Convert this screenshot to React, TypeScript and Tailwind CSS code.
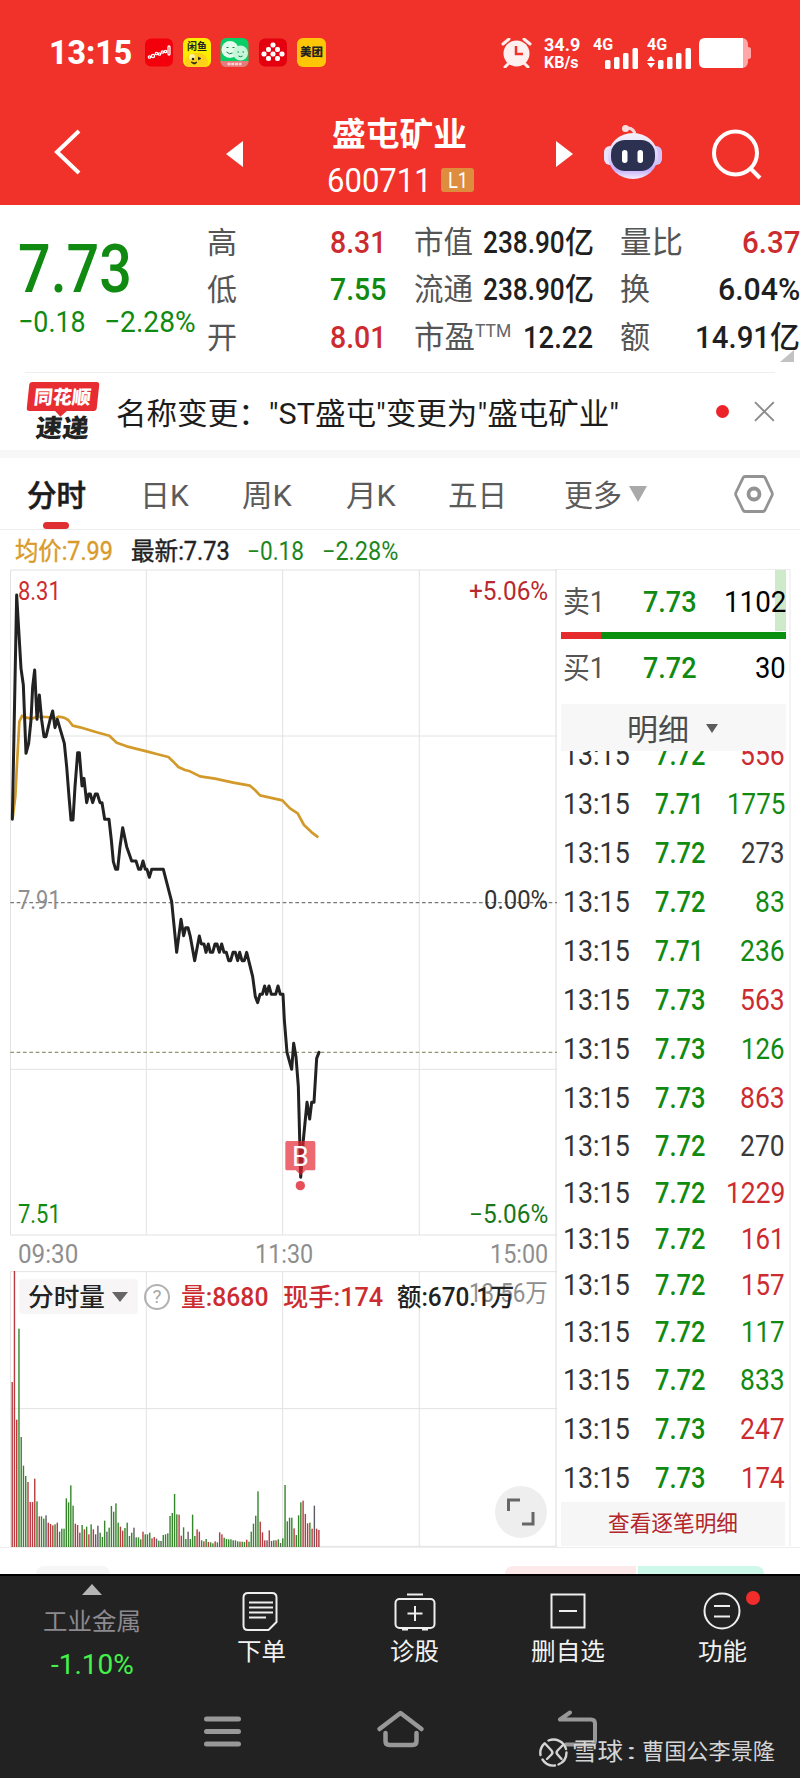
import { useLayoutEffect, useRef, useState, type ReactNode } from 'react';

const RED = 'text-[#cc2b30]';
const GREEN = 'text-[#108a10]';
const DARK = 'text-[#3a3a3a]';

// squeezes a run of text horizontally so it fills the width given in className
function Fit({ className = '', children }: { className?: string; children: ReactNode }) {
  const box = useRef<HTMLSpanElement>(null);
  const text = useRef<HTMLSpanElement>(null);
  const [ratio, setRatio] = useState(1);

  useLayoutEffect(() => {
    if (box.current && text.current) {
      setRatio(box.current.clientWidth / text.current.offsetWidth);
    }
  }, [children]);

  return (
    <span ref={box} className={`block shrink-0 ${className}`}>
      <span
        ref={text}
        className="inline-block origin-left whitespace-nowrap"
        style={{ transform: `scaleX(${ratio})` }}
      >
        {children}
      </span>
    </span>
  );
}

function SignalBars() {
  return (
    <svg width="34" height="21" viewBox="0 0 34 21" fill="#fff">
      <rect x="0" y="12" width="5.5" height="9" rx="1.5" />
      <rect x="9" y="9" width="5.5" height="12" rx="1.5" />
      <rect x="18" y="5" width="5.5" height="16" rx="1.5" />
      <rect x="27.5" y="0" width="5.5" height="21" rx="1.5" />
    </svg>
  );
}

function StatusBar() {
  return (
    <div className="flex h-[106px] items-start pl-[49px] pt-[38px] text-white">
      <Fit className="mt-[-1px] w-[83px] text-[34px] font-extrabold leading-[31px]">13:15</Fit>
      <div className="ml-[13px] flex gap-[10px]">
        <svg width="28" height="29" viewBox="0 0 28 29">
          <rect y="0.5" width="28" height="28" rx="6" fill="#f4000c" />
          <g fill="none" stroke="#fff" strokeWidth="1.3">
            <circle cx="4.5" cy="19" r="1.2" />
            <circle cx="8" cy="18" r="1.6" />
            <circle cx="11.5" cy="15.5" r="1.2" />
            <circle cx="14.5" cy="16" r="1.2" />
            <circle cx="17.5" cy="14" r="1.2" />
            <circle cx="20.5" cy="13.5" r="1.2" />
            <rect x="23" y="8" width="2" height="9" rx="1" />
          </g>
        </svg>
        <div className="relative h-[29px] w-[28px] overflow-hidden rounded-[6px] bg-[#fdee00] text-center text-[10px] font-bold leading-[17px] text-[#222]">
          闲鱼
          <svg className="absolute bottom-0 left-0" width="28" height="15" viewBox="0 0 28 15">
            <rect x="2" y="1" width="23" height="18" rx="9" fill="#ffd21a" />
            <circle cx="9" cy="5" r="3" fill="#fff59a" />
            <circle cx="10" cy="7" r="1.3" fill="#222" />
            <path d="M15 5l3 1.500-3 1.500M8 10q4 1.500 6 0-2 4-6 0z" fill="#222" stroke="#222" strokeWidth="0.7" />
          </svg>
        </div>
        <svg className="ml-[-1px]" width="29" height="29" viewBox="0 0 28 29">
          <rect width="28" height="29" rx="6" fill="#08ce67" />
          <path d="M0 23h28v1q-1 5-6 5H6q-5 0-6-5z" fill="#e9787a" />
          <circle cx="9.500" cy="11.500" r="8.500" fill="#e2fbec" />
          <circle cx="20" cy="15" r="7.500" fill="#c6f6d8" />
          <path d="M6 9.500h2M12 9.500h2M17 14h1.500M22 14h1.500M6 14q3 3 6 1M18 18q2 1.500 4 0" stroke="#098446" fill="none" />
          <path d="M7 26h14" stroke="#fbd5d5" strokeWidth="2.500" strokeDasharray="3 0.800" />
        </svg>
        <svg width="28" height="29" viewBox="0 0 28 29">
          <rect y="0.5" width="28" height="28" rx="6" fill="#e4000e" />
          <g fill="#fff">
            <rect x="11.500" y="4.500" width="5" height="5" rx="2" />
            <rect x="7" y="9" width="5" height="5" rx="2" />
            <rect x="16" y="9" width="5" height="5" rx="2" />
            <rect x="2.500" y="13.500" width="5" height="5" rx="2" />
            <rect x="11.500" y="13.500" width="5" height="5" rx="2" />
            <rect x="20.500" y="13.500" width="5" height="5" rx="2" />
            <rect x="7" y="18" width="5" height="5" rx="2" />
            <rect x="16" y="18" width="5" height="5" rx="2" />
          </g>
        </svg>
        <div className="h-[29px] w-[29px] rounded-[6px] bg-[#ffc608] text-center text-[11.500px] font-black leading-[29px] text-[#222]">
          美团
        </div>
      </div>

      <svg className="ml-[175px]" width="31" height="30" viewBox="0 0 31 30">
        <circle cx="15.500" cy="15.500" r="13" fill="#fff0f0" />
        <path d="M2 6l6-5M29 6l-6-5M4 29l4-4M27 29l-4-4" stroke="#fff0f0" strokeWidth="3" strokeLinecap="round" />
        <path d="M15 8v8h7" fill="none" stroke="#f0322b" strokeWidth="2.500" />
      </svg>
      <div className="ml-[12px] mt-[-2px] w-[36px] text-[18px] font-bold leading-[18px]">
        <Fit className="w-[36px]">34.9</Fit>
        <Fit className="w-[35px] text-[16px]">KB/s</Fit>
      </div>
      <div className="relative ml-[13px] h-[30px] w-[46px]">
        <Fit className="w-[20px] text-[16px] font-bold leading-[14px]">4G</Fit>
        <div className="absolute left-[12px] top-[10px]"><SignalBars /></div>
      </div>
      <div className="relative ml-[8px] h-[30px] w-[46px]">
        <Fit className="w-[20px] text-[16px] font-bold leading-[14px]">4G</Fit>
        <svg className="absolute left-0 top-[18px]" width="8" height="12" viewBox="0 0 8 12" fill="#fff">
          <path d="M4 0l4 5H0zM4 12l4-5H0z" />
        </svg>
        <div className="absolute left-[11px] top-[10px]"><SignalBars /></div>
      </div>
      <svg className="ml-[6px]" width="52" height="30" viewBox="0 0 52 30">
        <rect x="10" width="39" height="30" rx="6" fill="#ffa6a6" />
        <rect x="46" y="9" width="6" height="12" rx="2.500" fill="#ffa6a6" />
        <path d="M6 0h38v30H6q-6 0-6-6V6q0-6 6-6z" fill="#fff" />
      </svg>
    </div>
  );
}

function TitleBar() {
  return (
    <div className="flex h-[99px] items-start text-white">
      <svg className="ml-[53px] mt-[23px]" width="28" height="46" viewBox="0 0 28 46">
        <path d="M26 2L4 23l22 21" fill="none" stroke="#fff" strokeWidth="4" />
      </svg>
      <svg className="ml-[145px] mt-[35px]" width="18" height="26" viewBox="0 0 18 26">
        <path d="M17 0v26L0 13z" fill="#fff" />
      </svg>
      <div className="ml-[83px] w-[154px]">
        <Fit className="ml-[5px] mt-[11px] w-[135px] text-[33px] font-bold leading-[36px]">盛屯矿业</Fit>
        <div className="mt-[9px] flex items-center">
          <Fit className="w-[105px] text-[34px] leading-[36px]">600711</Fit>
          <div className="ml-[9px] flex h-[24px] w-[33px] justify-center rounded-[3px] bg-[#de8c3e] text-[22px] leading-[25px]">
            <Fit className="w-[20px]">L1</Fit>
          </div>
        </div>
      </div>
      <svg className="ml-[75px] mt-[35px]" width="18" height="26" viewBox="0 0 18 26">
        <path d="M0 0v26l17-13z" fill="#fff" />
      </svg>
      <svg className="ml-[29px] mt-[18px]" width="60" height="56" viewBox="0 0 60 56">
        <defs>
          <linearGradient id="shell" x1="0" y1="0" x2="0" y2="1">
            <stop offset="0" stopColor="#f4f1fb" />
            <stop offset="0.55" stopColor="#dcd2fa" />
            <stop offset="0.8" stopColor="#c3aefb" />
            <stop offset="1" stopColor="#f6effd" />
          </linearGradient>
        </defs>
        <path d="M24 4q8 0 8 8" fill="none" stroke="#f7d5dc" strokeWidth="3" />
        <circle cx="22.500" cy="4.500" r="3.500" fill="#f9dfe4" />
        <rect x="1" y="22" width="12" height="19" rx="6" fill="#e8e2fb" />
        <rect x="47" y="22" width="12" height="19" rx="6" fill="#d2c4fb" />
        <ellipse cx="30" cy="32" rx="25" ry="23" fill="url(#shell)" />
        <rect x="8" y="16" width="44" height="31" rx="14" fill="#2c3152" />
        <rect x="19" y="26" width="5.500" height="13" rx="2.700" fill="#fff" />
        <rect x="34.500" y="26" width="5.500" height="13" rx="2.700" fill="#fff" />
      </svg>
      <svg className="ml-[49px] mt-[23px]" width="50" height="52" viewBox="0 0 50 52">
        <circle cx="23.500" cy="24" r="21.500" fill="none" stroke="#fff" strokeWidth="4" />
        <path d="M38 39l10 10" stroke="#fff" strokeWidth="4" />
      </svg>
    </div>
  );
}

function Quote() {
  return (
    <div className="relative flex h-[167px] pt-[14px] text-[31px] font-medium leading-[47.3px] text-[#1f1f1f]">
      <div className="w-[207px] pl-[18px] text-[#108a10]">
        <Fit className="mt-[18px] w-[114px] text-[66px] leading-[66px]">7.73</Fit>
        <div className="mt-[-1px] flex text-[30px] font-normal leading-[40px]">
          <Fit className="w-[68px]">−0.18</Fit>
          <Fit className="ml-[18px] w-[92px]">−2.28%</Fit>
        </div>
      </div>
      <div className="w-[179px]">
        <div className="flex justify-between"><span className="text-[30px] font-normal text-[#555]">高</span><Fit className="w-[56px] text-[#cc2b30]">8.31</Fit></div>
        <div className="flex justify-between"><span className="text-[30px] font-normal text-[#555]">低</span><Fit className="w-[56px] text-[#108a10]">7.55</Fit></div>
        <div className="flex justify-between"><span className="text-[30px] font-normal text-[#555]">开</span><Fit className="w-[56px] text-[#cc2b30]">8.01</Fit></div>
      </div>
      <div className="ml-[28px] w-[180px]">
        <div className="flex justify-between"><Fit className="w-[59px] font-normal text-[#555]">市值</Fit><div className="flex"><Fit className="w-[82px]">238.90</Fit><Fit className="w-[29px]">亿</Fit></div></div>
        <div className="flex justify-between"><Fit className="w-[59px] font-normal text-[#555]">流通</Fit><div className="flex"><Fit className="w-[82px]">238.90</Fit><Fit className="w-[29px]">亿</Fit></div></div>
        <div className="flex">
          <Fit className="w-[61px] font-normal text-[#555]">市盈</Fit>
          <Fit className="mt-[-7px] w-[36px] text-[18px] font-normal text-[#666]">TTM</Fit>
          <Fit className="ml-[12px] w-[70px]">12.22</Fit>
        </div>
      </div>
      <div className="ml-[26px] w-[180px]">
        <div className="flex justify-between"><Fit className="w-[63px] font-normal text-[#555]">量比</Fit><Fit className="w-[58px] text-[#cc2b30]">6.37</Fit></div>
        <div className="flex justify-between"><Fit className="w-[30px] font-normal text-[#555]">换</Fit><Fit className="w-[82px]">6.04%</Fit></div>
        <div className="flex justify-between"><Fit className="w-[30px] font-normal text-[#555]">额</Fit><div className="flex"><Fit className="w-[75px]">14.91</Fit><Fit className="w-[30px]">亿</Fit></div></div>
      </div>
      <svg className="absolute bottom-[10px] right-[6px]" width="14" height="12" viewBox="0 0 14 12">
        <path d="M14 0v12H0z" fill="#c2c2c2" />
      </svg>
    </div>
  );
}

function NewsBar() {
  return (
    <div className="mx-[25px] flex h-[78px] border-t border-[#eee]">
      <div className="ml-[3px] w-[72px] pt-[9px]">
        <div className="relative h-[29px] w-[70px] -skew-x-6 rounded-[3px] bg-[#e72d31] pl-[6px] text-[19px] font-black leading-[31px] text-white">
          <Fit className="w-[57px]">同花顺</Fit>
          <span className="absolute bottom-[-4px] left-[30px] size-[9px] rotate-45 bg-[#e72d31]" />
        </div>
        <div className="-skew-x-6 pl-[8px] pt-[3px] text-[25px] font-black leading-[30px] text-[#222]">
          <Fit className="w-[53px]">速递</Fit>
        </div>
      </div>
      <Fit className="ml-[17px] w-[503px] text-[30px] leading-[81px] text-[#1c1c1c]">名称变更："ST盛屯"变更为"盛屯矿业"</Fit>
      <span className="ml-[97px] mt-[32px] size-[13px] rounded-full bg-[#ec2429]" />
      <svg className="ml-[25px] mt-[28px]" width="21" height="21" viewBox="0 0 21 21">
        <path d="M1 1l19 19M20 1L1 20" stroke="#8d8d8d" strokeWidth="2" />
      </svg>
    </div>
  );
}

function Tabs() {
  return (
    <div className="flex h-[72px] items-start border-b border-[#ededed] text-[30px] leading-[76px] text-[#5b5b5b]">
      <div className="relative ml-[27px]">
        <Fit className="w-[59px] font-medium text-[#1c1c1c] [-webkit-text-stroke:0.6px_#1c1c1c]">分时</Fit>
        <span className="absolute left-[16px] top-[64px] h-[7px] w-[26px] rounded-full bg-[#e02f32]" />
      </div>
      <Fit className="ml-[54px] w-[49px]">日K</Fit>
      <Fit className="ml-[53px] w-[50px]">周K</Fit>
      <Fit className="ml-[54px] w-[50px]">月K</Fit>
      <Fit className="ml-[52px] w-[59px]">五日</Fit>
      <Fit className="ml-[57px] w-[58px]">更多</Fit>
      <svg className="ml-[7px] mt-[28px]" width="18" height="16" viewBox="0 0 18 16">
        <path d="M0 0h18L9 16z" fill="#a9a9a9" />
      </svg>
      <svg className="ml-[87px] mt-[17px]" width="40" height="38" viewBox="0 0 40 38">
        <path d="M11 1.500h18q1.500 0 2.200 1.300L38 17.500q.7 1.500 0 3L31 35q-.8 1.500-2 1.500H11q-1.200 0-2-1.500L2 20.500q-.7-1.500 0-3L9 2.800q.7-1.300 2-1.300z" fill="none" stroke="#939393" strokeWidth="2.800" />
        <circle cx="20" cy="19" r="5.500" fill="none" stroke="#939393" strokeWidth="3.800" />
      </svg>
    </div>
  );
}

// traces in chart units, three to a pixel
const PRICE =
  '37,1108 50,435 63,655 70,705 78,910 86,880 93,810 98,710 104,660 111,808 118,735 125,810 132,860 138,860 150,810 158,783 165,833 172,808 193,880 200,950 207,1040 213,1110 219,1110 225,1010 233,908 238,908 246,1008 252,985 260,1058 266,1032 271,1032 278,1058 286,1032 292,1032 300,1058 306,1058 314,1108 327,1108 334,1170 340,1235 347,1258 353,1258 360,1190 368,1133 380,1190 395,1233 408,1233 416,1258 422,1258 429,1233 436,1258 441,1258 448,1282 455,1258 490,1258 515,1355 530,1507 543,1408 551,1457 557,1433 564,1433 571,1460 584,1532 598,1458 604,1482 612,1482 618,1507 625,1482 631,1507 638,1507 645,1482 651,1482 658,1507 665,1482 672,1507 679,1507 686,1532 692,1532 699,1507 706,1507 713,1532 719,1507 726,1532 733,1532 740,1507 758,1580 766,1640 773,1658 780,1633 787,1633 794,1608 800,1633 807,1608 814,1633 827,1633 834,1608 841,1633 849,1633 853,1710 861,1807 875,1858 881,1780 888,1820 895,1910 902,2182 910,2070 921,1957 929,2007 935,1957 942,1957 950,1825 957,1807';

const AVERAGE =
  '38,1105 41,1080 46,1040 50,960 55,870 58,815 66,797 80,803 95,806 110,800 140,801 165,805 175,800 192,803 205,810 218,827 240,832 290,847 328,857 350,878 380,889 440,904 470,912 505,921 520,935 535,951 555,960 570,964 600,979 645,986 700,998 750,1007 765,1020 780,1036 810,1043 847,1051 870,1075 893,1090 912,1125 935,1147 955,1162';

// one bar per minute: colour letter and height
const VOLUME =
  'r495 r828 r382 g655 g330 g244 g213 r195 r135 r135 r205 g137 r92 g92 g85 k95 r73 r69 r65 g68 r73 g46 g55 g55 g146 g134 g185 g124 r70 r66 k43 g66 r53 g61 r38 g68 r53 k38 k64 g43 g30 g79 k46 g58 g123 g106 g131 g73 r61 r49 g57 g73 g33 g43 k58 g29 g29 g23 r46 g38 g38 g43 r26 r30 k25 g19 k18 g36 g38 g41 g93 g102 g159 g98 r97 r34 g59 g24 k46 g24 g97 g33 r53 r46 g20 r17 g24 r15 g14 g11 r17 g14 r44 r38 g28 g24 g23 g23 k20 g20 g17 r16 g16 g15 r22 g16 g46 g70 g94 g167 r76 r44 r20 k20 r50 k18 g20 r20 g23 k12 g26 g186 g77 g88 g88 r56 g36 g95 g134 r139 r99 r71 g73 r55 k124 r55 r51'.split(' ');

const BAR_COLORS: Record<string, string> = { r: '#b93a3e', g: '#35862b', k: '#5f5a66' };

function PriceChart() {
  return (
    <div className="relative h-[667px] text-[25px] leading-[28px]">
      <svg className="block" width="547" height="667" viewBox="30 357 1641 2001">
        <g stroke="#e2e2e2" strokeWidth="3" fill="none">
          <path d="M31.500 360h1640M31.500 858h1640M31.500 1858h1640M31.500 2355h1640M31.500 360v1995M439 360v1995M848 360v1995M1258 360v1995" />
        </g>
        <path d="M31 1358h1640" stroke="#777" strokeWidth="4" strokeDasharray="11 8" />
        <path d="M31 1807h1640" stroke="#8f9672" strokeWidth="4" strokeDasharray="11 8" />
        <polyline points={AVERAGE} fill="none" stroke="#d29a2a" strokeWidth="8" strokeLinejoin="round" />
        <polyline points={PRICE} fill="none" stroke="#222" strokeWidth="9" strokeLinejoin="round" strokeLinecap="round" />
        <path d="M861 2073h80q5 0 5 5v78q0 5-5 5h-24l-15 15-15-15h-26q-5 0-5-5v-78q0-5 5-5z" fill="#e3222f" fillOpacity="0.68" />
        <circle cx="901" cy="2207" r="14" fill="#e5505a" />
      </svg>
      <Fit className="absolute left-[8px] top-[9px] w-[43px] text-[#cc2b30]">8.31</Fit>
      <Fit className="absolute right-[8px] top-[9px] w-[79px] text-[#b8282d]">+5.06%</Fit>
      <Fit className="absolute left-[8px] top-[318px] w-[43px] text-[#8e8e8e]">7.91</Fit>
      <Fit className="absolute right-[8px] top-[318px] w-[64px] text-[#333]">0.00%</Fit>
      <Fit className="absolute left-[8px] top-[632px] w-[43px] text-[#108a10]">7.51</Fit>
      <Fit className="absolute right-[8px] top-[632px] w-[79px] text-[#187818]">−5.06%</Fit>
      <span className="absolute left-[276px] top-[573px] w-[29px] text-center text-[27px] leading-[30px] text-white">B</span>
    </div>
  );
}

function VolumeChart() {
  return (
    <div className="relative h-[276px] text-[25px] font-medium leading-[36px]">
      <svg className="block" width="547" height="276" viewBox="30 122 1641 828">
        <path
          d="M31.500 124h1640M31.500 535h1640M31.500 948h1640M31.500 124v824M439 124v824M848 124v824M1258 124v824"
          stroke="#e2e2e2"
          strokeWidth="3"
        />
        {VOLUME.map((bar, i) => {
          const h = Number(bar.slice(1));
          return <rect key={i} x={34.500 + i * 6.765} y={950 - h} width="4.200" height={h} fill={BAR_COLORS[bar[0]]} />;
        })}
      </svg>
      <Fit className="absolute right-[8px] top-[5px] w-[79px] font-normal text-[#8e8e8e]">13.56万</Fit>
      <div className="absolute left-[9px] top-[8px] flex h-[35px] items-center">
        <div className="flex h-[35px] w-[119px] items-center rounded-[4px] bg-[#f7f5f6] pl-[9px] text-[#222]">
          <Fit className="w-[77px] pt-[2px]">分时量</Fit>
          <svg className="ml-[7px]" width="16" height="10" viewBox="0 0 16 10">
            <path d="M0 0h16L8 10z" fill="#666" />
          </svg>
        </div>
        <div className="ml-[6px] flex size-[26px] items-center justify-center rounded-full border-2 border-[#b2b2b2] text-[19px] font-normal text-[#a5a5a5]">
          ?
        </div>
        <Fit className="ml-[11px] w-[87px] pt-[2px] text-[#cc2b30]">量:8680</Fit>
        <Fit className="ml-[15px] w-[100px] pt-[2px] text-[#cc2b30]">现手:174</Fit>
        <Fit className="ml-[14px] w-[117px] pt-[2px] text-[#222]">额:670.1万</Fit>
      </div>
      <div className="absolute bottom-[9px] right-[9px] flex size-[52px] items-center justify-center rounded-full bg-[#eee]">
        <svg width="28" height="28" viewBox="0 0 28 28">
          <path d="M1.500 13V2H13M15 26h11V14" fill="none" stroke="#666" strokeWidth="3" />
        </svg>
      </div>
    </div>
  );
}

const TRADES = [
  { price: '7.71', vol: '1775', color: GREEN, priceW: 'w-[49px]', volW: 'w-[58px]', row: 'h-[49px]' },
  { price: '7.72', vol: '273', color: DARK, priceW: 'w-[51px]', volW: 'w-[44px]', row: 'h-[49px]' },
  { price: '7.72', vol: '83', color: GREEN, priceW: 'w-[51px]', volW: 'w-[30px]', row: 'h-[49px]' },
  { price: '7.71', vol: '236', color: GREEN, priceW: 'w-[49px]', volW: 'w-[45px]', row: 'h-[49px]' },
  { price: '7.73', vol: '563', color: RED, priceW: 'w-[51px]', volW: 'w-[45px]', row: 'h-[49px]' },
  { price: '7.73', vol: '126', color: GREEN, priceW: 'w-[51px]', volW: 'w-[44px]', row: 'h-[49px]' },
  { price: '7.73', vol: '863', color: RED, priceW: 'w-[51px]', volW: 'w-[45px]', row: 'h-[49px]' },
  { price: '7.72', vol: '270', color: DARK, priceW: 'w-[51px]', volW: 'w-[45px]', row: 'h-[48px]' },
  { price: '7.72', vol: '1229', color: RED, priceW: 'w-[51px]', volW: 'w-[59px]', row: 'h-[46px]' },
  { price: '7.72', vol: '161', color: RED, priceW: 'w-[51px]', volW: 'w-[44px]', row: 'h-[46px]' },
  { price: '7.72', vol: '157', color: RED, priceW: 'w-[51px]', volW: 'w-[44px]', row: 'h-[46px]' },
  { price: '7.72', vol: '117', color: GREEN, priceW: 'w-[51px]', volW: 'w-[44px]', row: 'h-[47px]' },
  { price: '7.72', vol: '833', color: GREEN, priceW: 'w-[51px]', volW: 'w-[45px]', row: 'h-[50px]' },
  { price: '7.73', vol: '247', color: RED, priceW: 'w-[51px]', volW: 'w-[45px]', row: 'h-[48px]' },
  { price: '7.73', vol: '174', color: RED, priceW: 'w-[51px]', volW: 'w-[44px]', row: 'h-[49px]' },
];

function OrderPanel() {
  return (
    <div className="ml-[-1px] h-[977px] w-[236px] border-x-2 border-t border-[#ededed] border-r-[#f4f4f4] pl-[4px] pr-[3px] text-[30px] font-medium leading-[36px]">
      <div className="relative flex h-[62px] items-center">
        <span className="absolute right-0 top-0 h-[61px] w-[11px] bg-[#cfe9cb]" />
        <Fit className="ml-[2px] w-[42px] pt-[2px] font-normal text-[#555]">卖1</Fit>
        <Fit className="ml-[38px] w-[54px] pt-px text-[#108a10]">7.73</Fit>
        <Fit className="relative ml-auto w-[62px] pt-px font-normal text-black">1102</Fit>
      </div>
      <div className="flex h-[7px]">
        <span className="w-[40px] bg-[#e52b2b]" />
        <span className="grow bg-[#0a900f]" />
      </div>
      <div className="flex h-[58px] items-center">
        <Fit className="ml-[2px] w-[42px] font-normal text-[#555]">买1</Fit>
        <Fit className="ml-[38px] w-[54px] text-[#108a10]">7.72</Fit>
        <Fit className="ml-auto w-[31px] font-normal text-black">30</Fit>
      </div>
      <div className="mt-[7px] flex h-[47px] items-center bg-[#f7f7f7] pl-[66px] font-normal text-[#4c4c4c]">
        <Fit className="w-[62px] pt-[4px]">明细</Fit>
        <svg className="ml-[17px] mt-[2px]" width="12" height="9" viewBox="0 0 12 9">
          <path d="M0 0h12L6 9z" fill="#5c5c5c" />
        </svg>
      </div>
      {/* first row is scrolled half out of view */}
      <div className="flex h-[28px] items-end overflow-hidden">
        <Trade price="7.72" vol="556" color={RED} priceW="w-[51px]" volW="w-[45px]" row="h-[49px]" />
      </div>
      {TRADES.map((t, i) => (
        <Trade key={i} {...t} />
      ))}
      <div className="mr-px flex h-[44px] items-center justify-center bg-[#f6f6f6] text-[22px] font-normal text-[#b3262a]">
        <Fit className="w-[130px]">查看逐笔明细</Fit>
      </div>
    </div>
  );
}

function Trade({ price, vol, color, priceW, volW, row }: (typeof TRADES)[number]) {
  return (
    <div className={`flex w-full shrink-0 items-center ${row}`}>
      <Fit className="ml-[2px] w-[67px] font-normal text-[#333]">13:15</Fit>
      <Fit className={`ml-[25px] text-[#108a10] ${priceW}`}>{price}</Fit>
      <Fit className={`ml-auto mr-px font-normal ${volW} ${color}`}>{vol}</Fit>
    </div>
  );
}

function BottomBar() {
  return (
    <div className="relative h-[205px] border-t-2 border-black bg-[#222] text-[#f2f2f2]">
      <div className="flex h-[117px] text-[24px] leading-[36px]">
        <div className="ml-[24px] flex w-[136px] flex-col items-center pt-[8px]">
          <svg width="20" height="11" viewBox="0 0 20 11">
            <path d="M10 0l10 11H0z" fill="#b5b5b5" />
          </svg>
          <Fit className="mt-[9px] w-[98px] text-[#8c8a90]">工业金属</Fit>
          <Fit className="mt-[7px] w-[83px] text-[27px] text-[#44f24a]">-1.10%</Fit>
        </div>
        <div className="ml-[24px] flex w-[154px] flex-col items-center pt-[15px]">
          <svg width="38" height="41" viewBox="0 0 38 41" fill="none" stroke="#eee" strokeWidth="2">
            <path d="M6 2h24q4.500 0 4.500 4.500V31l-8 8H6q-4.500 0-4.500-4.500v-28Q1.500 2 6 2z" />
            <path d="M7 11.500h24M7 16.500h24M7 21.500h24M7 26.500h17" />
          </svg>
          <Fit className="mt-[2px] w-[49px]">下单</Fit>
        </div>
        <div className="flex w-[153px] flex-col items-center pt-[15px]">
          <svg width="42" height="41" viewBox="0 0 42 41" fill="none" stroke="#eee" strokeWidth="2">
            <rect x="1.500" y="8" width="39" height="29" rx="4" />
            <path d="M13 3.500h16M8 38.500h6M28 38.500h6M21 15v15M13.500 22.500h15" />
          </svg>
          <Fit className="mt-[2px] w-[49px]">诊股</Fit>
        </div>
        <div className="flex w-[154px] flex-col items-center pt-[15px]">
          <svg width="36" height="41" viewBox="0 0 36 41" fill="none" stroke="#eee" strokeWidth="2">
            <rect x="1.500" y="3.500" width="33" height="33" />
            <path d="M9 20h18" />
          </svg>
          <Fit className="mt-[2px] w-[74px]">删自选</Fit>
        </div>
        <div className="relative flex w-[154px] flex-col items-center pt-[15px]">
          <svg width="38" height="41" viewBox="0 0 38 41" fill="none" stroke="#eee" strokeWidth="2">
            <circle cx="19" cy="20" r="17.500" />
            <path d="M11 15h16M11 25.500h16" />
          </svg>
          <Fit className="mt-[2px] w-[49px]">功能</Fit>
          <span className="absolute left-[101px] top-[15px] size-[14px] rounded-full bg-[#f12d2c]" />
        </div>
      </div>

      {/* system navigation */}
      <div className="flex pl-[203px] pt-[17px]">
        <svg className="mt-[6px]" width="39" height="32" viewBox="0 0 39 32">
          <path d="M3.500 3h32M3.500 15.500h32M3.500 28h32" stroke="#989898" strokeWidth="5" strokeLinecap="round" />
        </svg>
        <svg className="ml-[134px]" width="49" height="38" viewBox="0 0 49 38">
          <path d="M3.500 19L24.500 3l21 16M9.500 23v8q0 4 4 4h23q4 0 4-4v-8" fill="none" stroke="#989898" strokeWidth="4.500" strokeLinecap="round" strokeLinejoin="round" />
        </svg>
        <svg className="ml-[132px]" width="42" height="38" viewBox="0 0 42 38">
          <path d="M13 2.500L3 9.500h31q4 0 4 4v17q0 4-4 4H9" fill="none" stroke="#989898" strokeWidth="4" strokeLinecap="round" strokeLinejoin="round" />
        </svg>
      </div>
      <div className="absolute left-[539px] top-[161px] flex items-center text-[22px] leading-[30px] text-[#d4d4d4]">
        <svg width="29" height="29" viewBox="0 0 29 29" fill="none" stroke="#d4d4d4" strokeWidth="2.400" strokeLinecap="round">
          <path d="M9.500 2.500a13 13 0 0 1 17.500 8.500M27.500 14.500a13 13 0 0 1-8 12M16 27.500a13 13 0 0 1-12.500-6M1.500 17a13 13 0 0 1 4-11.500" />
          <path d="M6 5.500l6.500 7q1.800 2 0 4l-4.500 4.500M24.500 6.500l-6 6q-1.800 2 0 4l4 4.500" />
        </svg>
        <Fit className="ml-[4px] w-[51px] text-[24px]">雪球</Fit>
        <Fit className="ml-[3px] w-[10px]">:</Fit>
        <Fit className="ml-[6px] w-[133px]">曹国公李景隆</Fit>
      </div>
    </div>
  );
}

export default function App() {
  return (
    <div className="w-[800px] overflow-hidden bg-white font-[Roboto,'Noto_Sans_CJK_SC',sans-serif]">
      <header className="h-[205px] bg-[#f0322b]">
        <StatusBar />
        <TitleBar />
      </header>
      <Quote />
      <NewsBar />
      <div className="h-[8px] bg-[#f7f7f7]" />
      <Tabs />
      <div className="flex h-[39px] pl-[15px] text-[25px] leading-[44px]">
        <Fit className="w-[98px] text-[#d99b2b] [-webkit-text-stroke:0.4px_#d99b2b]">均价:7.99</Fit>
        <Fit className="ml-[18px] w-[99px] text-[#222] [-webkit-text-stroke:0.4px_#222]">最新:7.73</Fit>
        <Fit className="ml-[17px] w-[57px] text-[#1d861d]">−0.18</Fit>
        <Fit className="ml-[18px] w-[76px] text-[#1d861d]">−2.28%</Fit>
      </div>
      <div className="flex">
        <div className="ml-[10px] w-[546px]">
          <PriceChart />
          <div className="flex h-[35px] text-[25px] leading-[37px] text-[#8e8e8e]">
            <Fit className="ml-[8px] w-[60px]">09:30</Fit>
            <Fit className="ml-[177px] w-[58px]">11:30</Fit>
            <Fit className="ml-[177px] w-[58px]">15:00</Fit>
          </div>
          <VolumeChart />
        </div>
        <OrderPanel />
      </div>
      <div className="flex h-[27px] items-end border-t border-[#ededed]">
        <span className="ml-[36px] h-[8px] w-[74px] rounded-t-[20px] bg-[#f6f6f6]" />
        <span className="ml-[395px] h-[8px] w-[131px] rounded-tl-[20px] bg-[#fde8ea]" />
        <span className="ml-[2px] h-[8px] w-[126px] rounded-tr-[20px] bg-[#cdf8ea]" />
      </div>
      <BottomBar />
    </div>
  );
}
